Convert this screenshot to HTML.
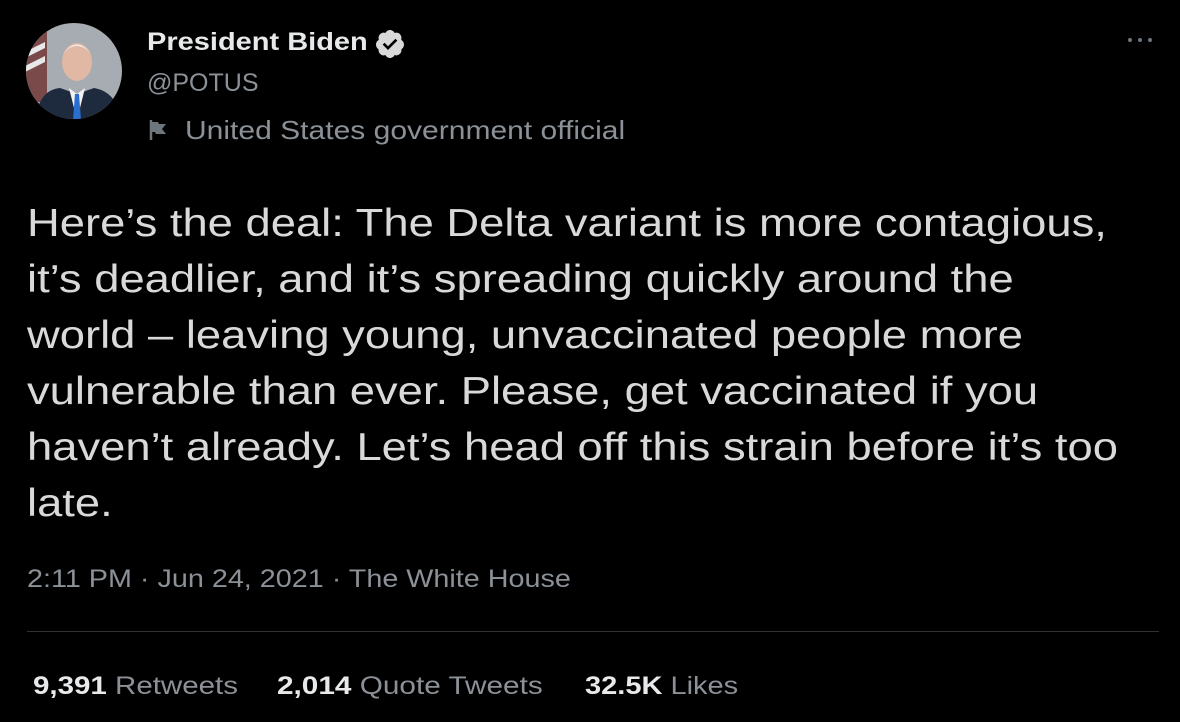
<!DOCTYPE html>
<html><head><meta charset="utf-8"><style>
body{margin:0;background:#000;width:1180px;height:722px;overflow:hidden;font-family:"Liberation Sans",sans-serif;position:relative}
.a{position:absolute;white-space:nowrap;transform-origin:0 0}
.g{color:#8b9197}
.txt{position:absolute;left:27px;top:196px;font-size:39px;line-height:56px;color:#d9d9d9;white-space:nowrap;transform:scaleX(1.163);transform-origin:0 0}
</style></head><body>
<svg class="a" style="left:25px;top:22px" width="98" height="98" viewBox="0 0 98 98">
<defs><clipPath id="c"><circle cx="49" cy="49" r="48"/></clipPath></defs>
<g clip-path="url(#c)">
<rect width="98" height="98" fill="#a7acb2"/>
<rect x="0" y="10" width="22" height="70" fill="#7a4a4a"/>
<path d="M0 30 L20 20 L20 26 L0 36Z M0 44 L20 34 L20 40 L0 50Z" fill="#e8e8e8"/>
<ellipse cx="52" cy="40" rx="15" ry="19" fill="#e0b8a4"/>
<path d="M37 33 Q52 12 67 33 Q60 24 52 24 Q44 24 37 33Z" fill="#eee"/>
<path d="M10 98 Q14 68 35 66 L52 72 L69 66 Q92 70 96 98Z" fill="#1e2a3e"/>
<path d="M44 66 L52 98 L60 66 L52 72Z" fill="#f2f2f2"/>
<path d="M50 72 L54 72 L56 98 L48 98Z" fill="#2a6fd0"/>
</g></svg>
<div class="a" style="left:147px;top:28px;font-size:25px;font-weight:bold;color:#e7e9ea;transform:scaleX(1.16)">President Biden</div>
<svg class="a" style="left:373px;top:28px" width="34" height="32" viewBox="0 0 24 24"><path fill="#d9d9d9" d="M22.5 12.5c0-1.58-.875-2.950-2.148-3.6.154-.435.238-.905.238-1.4 0-2.210-1.710-3.998-3.818-3.998-.47 0-.92.084-1.336.25C14.818 2.415 13.51 1.5 12 1.5s-2.816.917-3.437 2.250c-.415-.165-.866-.25-1.336-.25-2.11 0-3.818 1.790-3.818 4 0 .494.083.964.237 1.4-1.272.65-2.147 2.018-2.147 3.6 0 1.495.782 2.798 1.942 3.486-.02.17-.032.34-.032.514 0 2.210 1.708 4 3.818 4 .47 0 .92-.086 1.335-.25.62 1.334 1.926 2.250 3.437 2.250 1.512 0 2.818-.916 3.437-2.250.415.163.865.248 1.336.248 2.110 0 3.818-1.790 3.818-4 0-.174-.012-.344-.033-.513 1.158-.687 1.943-1.990 1.943-3.484z"/><path fill="#000" d="M10.5 16.5l-4-4 1.4-1.4 2.6 2.6 5.6-5.6 1.4 1.4z"/></svg>
<div class="a g" style="left:147px;top:69px;font-size:25px">@POTUS</div>
<svg class="a" style="left:148px;top:118px" width="24" height="24" viewBox="0 0 24 24"><path d="M3 2v20" stroke="#6e767d" stroke-width="2.5"/><path d="M4 4h6l1 2h7l-4 5 4 5h-10l-1-2h-3z" fill="#6e767d"/></svg>
<div class="a g" style="left:185px;top:115px;font-size:26px;transform:scaleX(1.155)">United States government official</div>
<svg class="a" style="left:1126px;top:32px" width="30" height="16"><circle cx="4" cy="8" r="2" fill="#6e767d"/><circle cx="14" cy="8" r="2" fill="#6e767d"/><circle cx="24" cy="8" r="2" fill="#6e767d"/></svg>
<div class="txt">Here’s the deal: The Delta variant is more contagious,<br>it’s deadlier, and it’s spreading quickly around the<br>world – leaving young, unvaccinated people more<br>vulnerable than ever. Please, get vaccinated if you<br>haven’t already. Let’s head off this strain before it’s too<br>late.</div>
<div class="a g" style="left:27px;top:565px;font-size:25px;transform:scaleX(1.15)">2:11 PM · Jun 24, 2021 · The White House</div>
<div class="a" style="left:27px;top:631px;width:1132px;height:1px;background:#2f3336"></div>
<div class="a" style="left:33px;top:672px;font-size:25px;color:#8b9197;transform:scaleX(1.18)"><b style="color:#e7e9ea">9,391</b> Retweets</div>
<div class="a" style="left:277px;top:672px;font-size:25px;color:#8b9197;transform:scaleX(1.19)"><b style="color:#e7e9ea">2,014</b> Quote Tweets</div>
<div class="a" style="left:585px;top:672px;font-size:25px;color:#8b9197;transform:scaleX(1.16)"><b style="color:#e7e9ea">32.5K</b> Likes</div>
</body></html>
